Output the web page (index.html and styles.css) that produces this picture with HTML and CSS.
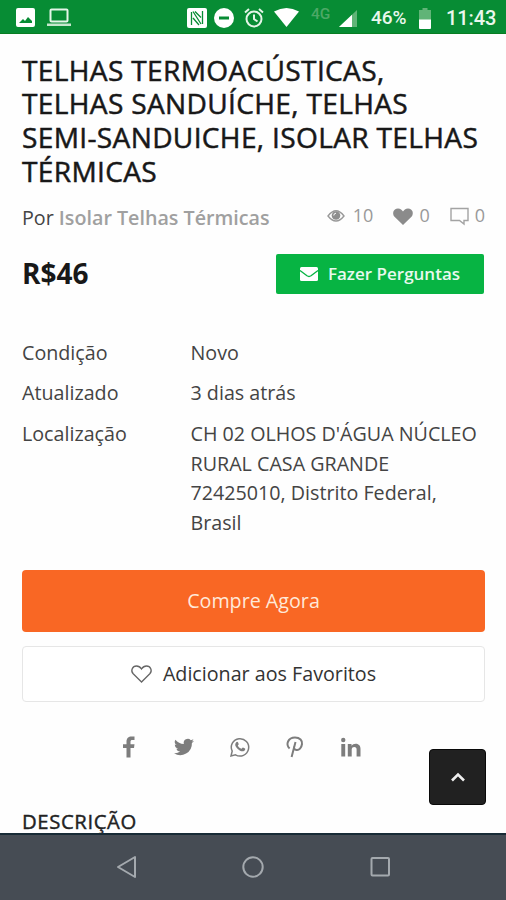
FILE: index.html
```html
<!DOCTYPE html>
<html lang="pt-BR">
<head>
<meta charset="utf-8">
<title>Isolar Telhas Térmicas</title>
<link rel="stylesheet" href="styles.css">
</head>
<body>
<header class="status">
  <svg class="s-img" width="19" height="19" viewBox="0 0 19 19"><path fill="#fff" fill-rule="evenodd" d="M2 0h15a2 2 0 0 1 2 2v15a2 2 0 0 1-2 2H2a2 2 0 0 1-2-2V2a2 2 0 0 1 2-2zM3 15h13v-2l-4-4-3 4-2-2z"/></svg>
  <svg class="s-lap" width="24" height="19" viewBox="0 0 24 19"><rect x="3.500" y="1.500" width="17" height="12" rx="1" fill="none" stroke="#e4f5e7" stroke-width="2"/><path d="M0 15.500h24v2.500H0z" fill="#c5e6cc"/></svg>
  <svg class="s-nfc" width="20" height="20" viewBox="0 0 20 20"><rect width="20" height="20" rx="2" fill="#fff"/><path d="M4.500 17V4M6 3.500l8 12.500M8 3.500l6 6M6 10l6 7M15.500 3v13" fill="none" stroke="#078c34" stroke-width="1.300"/></svg>
  <svg class="s-dnd" width="20" height="20" viewBox="0 0 20 20"><circle cx="10" cy="10" r="10" fill="#fff"/><path d="M5 8.500h10v3H5z" fill="#078c34"/></svg>
  <svg class="s-alarm" width="20" height="20" viewBox="0 0 20 20"><g fill="none" stroke="#e4f5e7" stroke-width="2"><circle cx="10" cy="11" r="7.500"/><path d="M10 6.500V11l3.500 2.500M1 4.500L5 1M19 4.500L15 1"/></g></svg>
  <svg class="s-wifi" width="25" height="19" viewBox="0 0 25 19"><path d="M0 3.500Q12.500-3.500 25 3.500L12.500 19z" fill="#fff"/></svg>
  <span class="s-4g">4G</span>
  <svg class="s-sig" width="18" height="17" viewBox="0 0 18 17"><path d="M0 17L18 0v17z" fill="#60b477"/><path d="M0 17L13 4.700V17z" fill="#fff"/></svg>
  <span class="s-pct">46%</span>
  <svg class="s-bat" width="12" height="21" viewBox="0 0 12 21"><path d="M3.500 0h5v2H12v10H0V2h3.500z" fill="#60b477"/><path d="M0 11.500h12V20a1 1 0 0 1-1 1H1a1 1 0 0 1-1-1z" fill="#fff"/></svg>
  <time class="s-time">11:43</time>
</header>

<main class="page">
  <h1 class="title">TELHAS TERMOACÚSTICAS,<br>TELHAS SANDUÍCHE, TELHAS<br>SEMI-SANDUICHE, ISOLAR TELHAS<br>TÉRMICAS</h1>

  <div class="meta">
    <p class="seller">Por <a class="seller-name">Isolar Telhas Térmicas</a></p>
    <div class="stats">
      <svg width="18" height="14" viewBox="0 0 18 14"><path d="M1 7Q9-3.500 17 7Q9 17 1 7z" fill="none" stroke="#999" stroke-width="1.400"/><circle cx="9" cy="6.500" r="4.300" fill="#8e8e8e"/><path d="M6.800 6.500A2.300 2.300 0 0 1 9 4.200" fill="none" stroke="#fff"/></svg>
      <span class="views">10</span>
      <svg width="20" height="17" viewBox="0 0 20 17"><path fill="#8b8b8b" d="M10 17L1.500 8.800C-1 6 0 .500 5 .500c2.500 0 4 1.500 5 3 1-1.500 2.500-3 5-3 5 0 6 5.500 3.500 8.300z"/></svg>
      <span class="likes">0</span>
      <svg width="19" height="18" viewBox="0 0 19 18"><path d="M1 1.500h17v12h-4V17l-4.500-3.500H1z" fill="none" stroke="#a3a3a3" stroke-width="1.400"/></svg>
      <span class="comments">0</span>
    </div>
  </div>

  <div class="offer">
    <strong class="price">R$46</strong>
    <button class="ask"><svg width="18" height="14" viewBox="0 0 18 14"><rect width="18" height="14" rx="1.500" fill="#fff"/><path d="M0 3.500l7 5.300q2 1.400 4 0l7-5.300" fill="none" stroke="#07b443" stroke-width="1.300"/></svg><span>Fazer Perguntas</span></button>
  </div>

  <dl class="details">
    <dt>Condição</dt><dd>Novo</dd>
    <dt>Atualizado</dt><dd>3 dias atrás</dd>
    <dt>Localização</dt><dd>CH 02 OLHOS D'ÁGUA NÚCLEO RURAL CASA GRANDE<br>72425010, Distrito Federal, Brasil</dd>
  </dl>

  <button class="buy">Compre Agora</button>
  <button class="favorite"><svg width="21" height="18" viewBox="0 0 21 18"><path d="M10.500 17L2.200 8.800C-.8 5.500 1.500 1 5.500 1c2.500 0 4 1.500 5 3 1-1.500 2.500-3 5-3 4 0 6.300 4.500 3.300 7.800z" fill="none" stroke="#666" stroke-width="1.300"/></svg><span>Adicionar aos Favoritos</span></button>

  <nav class="share">
    <svg width="20" height="22" viewBox="0 0 20 22"><path fill="#7d7d7d" d="M7.500 21.500V12H4V8.300h3.500V6c0-4 2-5.500 5-5.500h3V4h-2c-1.500 0-2 .6-2 2v2.300h4l-.5 3.700h-3.500v9.500z"/></svg>
    <svg width="20" height="22" viewBox="0 0 24 24"><path fill="#7d7d7d" d="M24 4.600a10 10 0 0 1-2.800.8 5 5 0 0 0 2.100-2.700c-1 .6-2 1-3.100 1.200a4.900 4.900 0 0 0-8.400 4.500A14 14 0 0 1 1.700 3.200a4.900 4.900 0 0 0 1.500 6.500A5 5 0 0 1 1 9.100a5 5 0 0 0 3.900 4.900 5 5 0 0 1-2.200.1 5 5 0 0 0 4.600 3.400A10 10 0 0 1 0 19.500 14 14 0 0 0 21.500 7.100 10 10 0 0 0 24 4.600z"/></svg>
    <svg width="20" height="22" viewBox="0 0 20 22"><path d="M1 20l1.200-4.800A8.700 8.700 0 1 1 5.500 18.800z" fill="none" stroke="#7d7d7d" stroke-width="1.500"/><path fill="#7d7d7d" d="M6 6.500c1-1.300 1.800-.8 2.100 0l.6 1.600c.2.600-1 1.200-.8 1.600 1 1.800 2.100 2.500 3.500 3 .6.200 1-1.300 1.600-1.100l2 1c.7.400-.1 2.100-1 2.500-1.700.8-4.500-.2-6.500-2.300-2.300-2.500-3-4.500-1.500-6.300z"/></svg>
    <svg width="20" height="22" viewBox="0 0 20 22"><path d="M4.600 12.500C.3 8.500 3 1.500 10 1.500c5 0 7.500 3 7 6.500-.5 4-3 6.500-5.500 6-2-.4-2.800-1.700-2.500-3M10.500 6L6.600 21" fill="none" stroke="#7d7d7d" stroke-width="2"/></svg>
    <svg width="20" height="22" viewBox="0 0 20 22"><path fill="#7d7d7d" d="M.3 8h3.900v12.500H.3zM6.800 8h3.700v1.700c2-3 9-3 9 3v7.800h-3.900v-7c0-3.300-4.900-3.200-4.900 0v7H6.800z"/><circle cx="2.250" cy="4" r="2.200" fill="#7d7d7d"/></svg>
  </nav>

  <h2 class="section">DESCRIÇÃO</h2>
</main>

<button class="to-top"><svg width="16" height="10" viewBox="0 0 16 10"><path d="M2 8.500l6-6 6 6" fill="none" stroke="#eee" stroke-width="2.600"/></svg></button>

<footer class="navbar">
  <svg width="22" height="24" viewBox="0 0 22 24"><path d="M2 12L19 2v20z" fill="none" stroke="#a4a9ae" stroke-width="2" stroke-linejoin="round"/></svg>
  <svg width="22" height="24" viewBox="0 0 22 24"><circle cx="11" cy="12" r="9.700" fill="none" stroke="#a4a9ae" stroke-width="2"/></svg>
  <svg width="22" height="24" viewBox="0 0 22 24"><rect x="2.500" y="3" width="17.500" height="17.500" rx="1" fill="none" stroke="#a4a9ae" stroke-width="2"/></svg>
</footer>
</body>
</html>
```

FILE: styles.css
```css
* { box-sizing: border-box; margin: 0; padding: 0; }
body {
  width: 506px;
  height: 900px;
  overflow: hidden;
  display: flex;
  flex-direction: column;
  background: #fefefe;
  font-family: "Open Sans", "Noto Sans", sans-serif;
  font-size: 19.7px;
  line-height: 29.5px;
  color: #444;
}
svg { display: block; flex: none; overflow: visible; }
button { border: 0; font: inherit; display: flex; align-items: center; justify-content: center; white-space: nowrap; }

.status {
  flex: none;
  height: 34px;
  display: flex;
  align-items: flex-start;
  padding-top: 8px;
  background: #078c34;
  border-bottom: 1px solid #087d22;
  font-family: Roboto, sans-serif;
  line-height: 20px;
  color: #e9f7ec;
}
.s-img { margin-left: 16px; }
.s-lap { margin-left: 12px; }
.s-nfc { margin-left: 116px; }
.s-dnd { margin-left: 7px; }
.s-alarm { margin-left: 10px; }
.s-wifi { margin-left: 10px; }
.s-4g { width: 22px; margin: -4px 0 0 12px; font-size: 15.500px; font-weight: 500; color: #4da866; }
.s-sig { margin: 2px 0 0 6px; }
.s-pct { width: 38px; margin-left: 14px; font-size: 19px; font-weight: 500; }
.s-bat { margin-left: 10px; }
.s-time { margin-left: 15px; font-size: 20px; font-weight: 500; letter-spacing: -.1px; white-space: nowrap; }

.page { flex: 1; min-height: 0; padding: 19.500px 21px 0 22px; display: flex; flex-direction: column; }
.title { flex: none; font-size: 28.1px; line-height: 33.750px; font-weight: 400; letter-spacing: .33px; white-space: nowrap; color: #181818; -webkit-text-stroke: .5px #181818; }

.meta { flex: none; display: flex; justify-content: space-between; align-items: center; margin-top: 14px; height: 30px; }
.seller { color: #444; }
.seller-name { color: #a0a0a0; font-weight: 600; }
.stats { display: flex; align-items: center; color: #999; font-size: 18px; padding-bottom: 3px; }
.views { margin: 0 20px 0 8px; }
.likes { margin: 0 20px 0 6px; }
.comments { margin-left: 6px; }

.offer { flex: none; display: flex; justify-content: space-between; margin-top: 21px; height: 40px; align-items: center; }
.price { font-size: 28px; font-weight: 700; color: #181818; }
.ask { width: 208px; height: 40px; margin-right: 1px; gap: 10px; border-radius: 2px; background: #07b443; color: #e9f9ee; font-size: 17px; font-weight: 600; }

.details { flex: none; display: grid; grid-template-columns: 168.500px 1fr; row-gap: 11.250px; margin-top: 44px; }

.buy { flex: none; height: 62px; margin-top: 33px; border-radius: 4px; background: #f96724; color: #ffe9d9; }
.favorite { flex: none; height: 56px; margin-top: 14px; gap: 11px; border: 1px solid #e6e6e6; border-radius: 4px; background: #fff; color: #333; }

.share { flex: none; display: flex; justify-content: center; gap: 35.500px; margin: 34px 28px 0 0; }
.section { flex: none; margin-top: 49px; font-size: 20.300px; font-weight: 400; letter-spacing: .6px; color: #222; -webkit-text-stroke: .4px #222; }

.to-top { position: absolute; left: 429px; top: 749px; width: 57px; height: 56px; border-radius: 4px; background: #212121; border: 1px solid #090909; }

.navbar {
  flex: none;
  height: 67px;
  display: flex;
  justify-content: center;
  gap: 104.500px;
  padding-top: 20px;
  border-top: 2px solid #182b36;
  background: #464c54;
}
```
